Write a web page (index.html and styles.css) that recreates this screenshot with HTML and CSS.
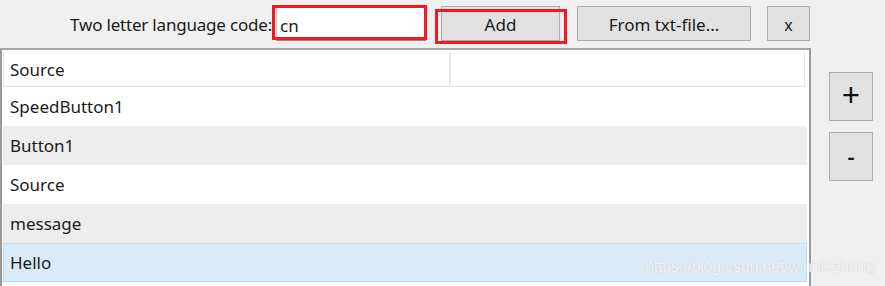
FILE: index.html
```html
<!DOCTYPE html>
<html lang="en">
<head>
  <meta charset="UTF-8" />
  <title>Language editor</title>
  <link rel="stylesheet" href="styles.css">
</head>
<body>
  <div class="window">
    <div class="main">
      <!-- Toolbar -->
      <div class="toolbar">
        <span class="label">Two letter language code:</span>
        <input class="code-input" type="text" value="cn">
        <button class="btn btn-add">Add</button>
        <button class="btn btn-file">From txt-file...</button>
        <button class="btn btn-close">x</button>
        <div class="mark mark-input"></div>
        <div class="mark mark-add"></div>
      </div>

      <!-- Grid -->
      <div class="grid">
        <div class="grid-header">
          <div class="col col-source">Source</div>
          <div class="col col-rest"></div>
        </div>
        <div class="row">SpeedButton1</div>
        <div class="row alt">Button1</div>
        <div class="row">Source</div>
        <div class="row alt">message</div>
        <div class="row selected">Hello</div>
      </div>
    </div>

    <div class="side">
      <button class="btn side-btn plus">+</button>
      <button class="btn side-btn minus">-</button>
    </div>

    <div class="watermark">https://blog.csdn.net/winniezhang</div>
  </div>
</body>
</html>
```

FILE: styles.css
```css
body {
  margin: 0;
  background: #f0f0f0;
  font-family: 'Noto Sans', 'Open Sans', sans-serif;
  font-size: 17px;
  color: #1b1b1b;
  overflow: hidden;
}

.window {
  position: relative;
  display: flex;
  height: 286px;
}

.main {
  width: 811px;
}

/* toolbar */
.toolbar {
  position: relative;
  display: flex;
  align-items: flex-start;
  height: 48px;
  padding-top: 6px;
  box-sizing: border-box;
}

.label {
  width: 272px;
  text-align: right;
  line-height: 38px;
  letter-spacing: -0.2px;
}

.code-input {
  margin: 1px 0 0 4px;
  width: 150px;
  height: 34px;
  box-sizing: border-box;
  border: 1px solid #c8c8c8;
  border-bottom-color: #8a8a8a;
  border-right-color: #8a8a8a;
  background: #fff;
  font-family: inherit;
  font-size: 17px;
  color: #1b1b1b;
  padding: 2px 3px 0;
  outline: none;
}

.btn {
  background: #e1e1e1;
  border: 1px solid #adadad;
  font-family: inherit;
  font-size: 17px;
  color: #1b1b1b;
  padding: 2px 0 0;
  box-sizing: border-box;
}

.btn-add {
  margin-left: 15px;
  width: 119px;
  height: 35px;
}

.btn-file {
  margin-left: 17px;
  width: 174px;
  height: 35px;
}

.btn-close {
  margin-left: 16px;
  width: 43px;
  height: 35px;
  font-size: 16px;
}

/* red annotation frames */
.mark {
  position: absolute;
  border: 3px solid #ed1c24;
  box-sizing: border-box;
}

.mark-input {
  left: 272px;
  top: 5px;
  width: 155px;
  height: 35px;
}

.mark-add {
  left: 435px;
  top: 9px;
  width: 132px;
  height: 35px;
}

/* grid */
.grid {
  height: 238px;
  border: 2px solid #9a9a9a;
  border-bottom: none;
  border-top-color: #a8a8a8;
  background: #fff;
  padding: 2px 2px 0 1px;
  box-sizing: border-box;
}

.grid-header {
  display: flex;
  height: 35px;
  box-sizing: border-box;
  border: 1px solid #e5e5e5;
  border-top: none;
  margin-right: 2px;
}

.col {
  line-height: 35px;
  padding-left: 6px;
}

.col-source {
  width: 439px;
  border-right: 2px solid #e8e8e8;
}

.col-rest {
  flex: 1;
}

.row {
  height: 39px;
  line-height: 39px;
  padding-left: 7px;
  box-sizing: border-box;
}

.row.alt {
  background: #ededed;
}

.row.selected {
  background: #d9ebf9;
  border: 1px solid #bcdcf4;
  line-height: 37px;
  padding-left: 6px;
}

/* side buttons */
.side {
  display: flex;
  flex-direction: column;
  gap: 11px;
  padding: 72px 0 0 18px;
}

.side-btn {
  width: 44px;
  height: 49px;
}

.plus {
  font-size: 32px;
  line-height: 1;
  padding: 0 0 4px;
  color: #111;
}

.minus {
  font-size: 22px;
  font-weight: 600;
  padding: 0 0 2px;
}

.watermark {
  position: absolute;
  right: 10px;
  top: 258px;
  white-space: nowrap;
  font-family: 'Liberation Sans', Arial, sans-serif;
  font-size: 16px;
  letter-spacing: -0.2px;
  color: rgba(255, 255, 255, 0.85);
  text-shadow: 0 0 1px #b5b5b5;
}
```
